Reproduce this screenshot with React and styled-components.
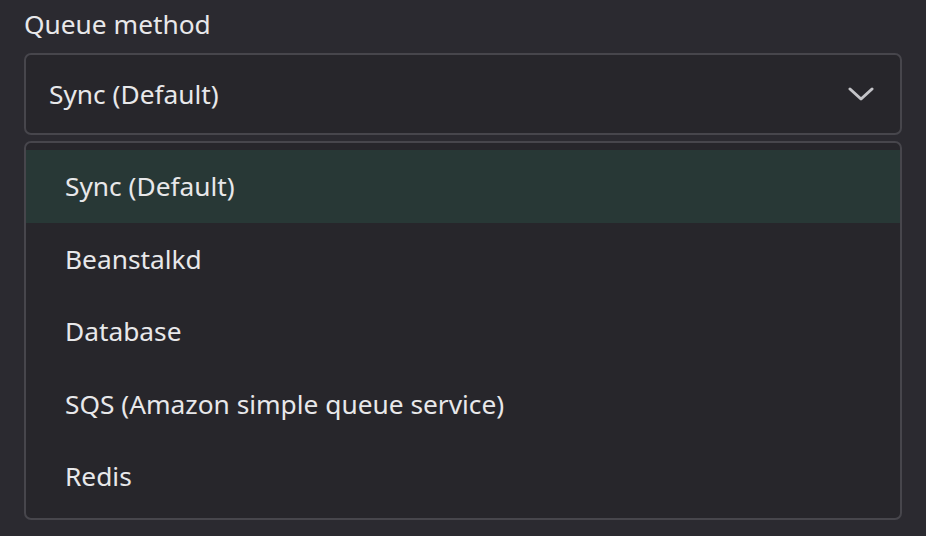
import React, { useState } from 'react';
import styled, { createGlobalStyle } from 'styled-components';

const GlobalStyle = createGlobalStyle`
  html, body {
    margin: 0;
    padding: 0;
    background: #2b2a30;
    font-family: "Noto Sans", "Open Sans", sans-serif;
    color: #e8e8ea;
  }
`;

const Page = styled.div`
  width: 926px;
  height: 536px;
  box-sizing: border-box;
  padding: 6px 24px 0 24px;
  display: flex;
  flex-direction: column;
  overflow: hidden;
`;

const Label = styled.div`
  font-size: 26.3px;
  line-height: 36px;
  color: #e8e8ea;
  margin-bottom: 11px;
`;

const SelectBox = styled.div`
  height: 82px;
  box-sizing: border-box;
  border: 2px solid #47464c;
  border-radius: 7px;
  background: #27262b;
  display: flex;
  align-items: center;
  justify-content: space-between;
  padding: 0 26px 0 23px;
  font-size: 26.3px;
`;

const Menu = styled.ul`
  list-style: none;
  margin: 6px 0 0 0;
  padding: 7px 0 5px 0;
  border: 2px solid #47464c;
  border-radius: 7px;
  background: #27262b;
  display: flex;
  flex-direction: column;
`;

const Item = styled.li`
  height: 72.5px;
  display: flex;
  align-items: center;
  padding-left: 39px;
  font-size: 26.3px;
  background: ${(p) => (p.$active ? '#283836' : 'transparent')};
`;

const Chevron = () => (
  <svg width="26" height="16" viewBox="0 0 26 16" fill="none">
    <path d="M2 3l11 10L24 3" stroke="#c4c4c8" strokeWidth="3" strokeLinecap="round" strokeLinejoin="round" />
  </svg>
);

const options = [
  'Sync (Default)',
  'Beanstalkd',
  'Database',
  'SQS (Amazon simple queue service)',
  'Redis',
];

export default function App() {
  const [value] = useState(options[0]);
  return (
    <>
      <GlobalStyle />
      <Page>
        <Label>Queue method</Label>
        <SelectBox>
          <span>{value}</span>
          <Chevron />
        </SelectBox>
        <Menu>
          {options.map((o) => (
            <Item key={o} $active={o === value}>
              {o}
            </Item>
          ))}
        </Menu>
      </Page>
    </>
  );
}
